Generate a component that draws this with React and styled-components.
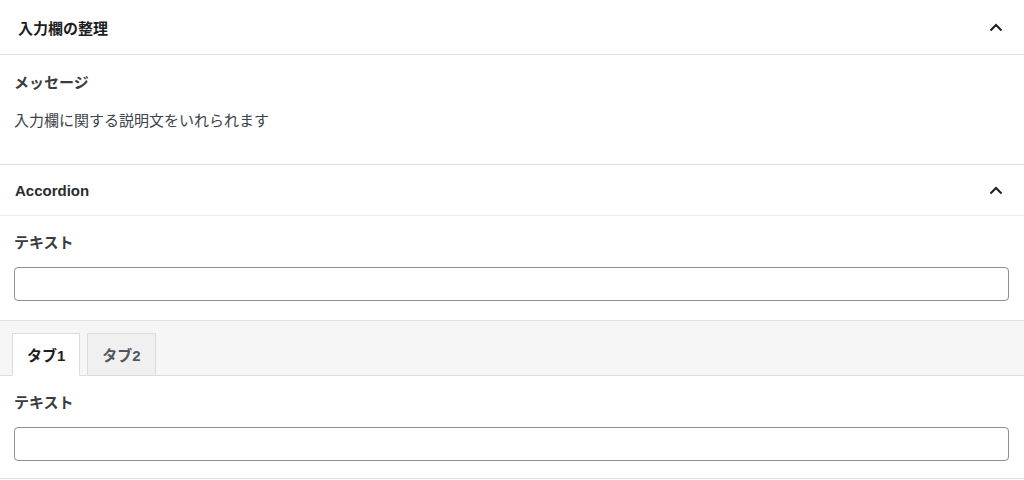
import React, { useState } from 'react';
import styled, { createGlobalStyle } from 'styled-components';

const GlobalStyle = createGlobalStyle`
    html, body {
        margin: 0;
        padding: 0;
        background: #fff;
    }
    body {
        font-family: "Liberation Sans", "Noto Sans CJK JP", sans-serif;
        color: #1e1e1e;
    }
`;

const Sidebar = styled.div`
    width: 1024px;
    height: 480px;
    overflow: hidden;
    background: #fff;
`;

const Panel = styled.section`
    border-bottom: ${(p) => (p.$open ? 'none' : '1px solid #e0e0e0')};
`;

const PanelHeader = styled.div`
    height: ${(p) => p.$height}px;
    padding: 0 16px 0 ${(p) => p.$indent}px;
    display: flex;
    align-items: center;
    justify-content: space-between;
    border-bottom: 1px solid ${(p) => p.$line};
`;

const PanelTitle = styled.h2`
    margin: 0;
    font-size: 15px;
    font-weight: 700;
    color: ${(p) => p.$color || '#1e1e1e'};
`;

const PanelBody = styled.div`
    padding: ${(p) => p.$top}px 15px ${(p) => p.$bottom}px 14px;
    display: flex;
    flex-direction: column;
`;

const Label = styled.div`
    font-size: 15px;
    line-height: 22px;
    font-weight: 700;
    color: #3c3c3c;
`;

const Help = styled.p`
    margin: 16px 0 0;
    font-size: 15px;
    line-height: 22px;
    color: #3c434a;
`;

const TextInput = styled.input`
    margin-top: 13px;
    height: 34px;
    box-sizing: border-box;
    width: 100%;
    border: 1px solid #8c8f94;
    border-radius: 4px;
    background: #fff;
    outline: none;
    font-size: 15px;
    padding: 0 8px;
`;

const TabList = styled.div`
    display: flex;
    align-items: flex-end;
    gap: 7px;
    padding: 12px 12px 0;
    height: 56px;
    box-sizing: border-box;
    background: #f6f6f6;
    border-top: 1px solid #e0e0e0;
    border-bottom: 1px solid #dcdcde;
`;

const Tab = styled.button`
    height: 43px;
    margin-bottom: -1px;
    padding: 0 14px;
    box-sizing: border-box;
    border: 1px solid #dcdcde;
    border-bottom-color: ${(p) => (p.$active ? '#fff' : '#dcdcde')};
    background: ${(p) => (p.$active ? '#fff' : '#f0f0f0')};
    font-family: inherit;
    font-size: 15px;
    font-weight: 700;
    color: ${(p) => (p.$active ? '#1e1e1e' : '#50575e')};
    cursor: pointer;
`;

const Chevron = () => (
    <svg width="24" height="24" viewBox="0 0 24 24" aria-hidden="true">
        <path d="M6.5 15.5 12 10l5.5 5.5" fill="none" stroke="#1e1e1e" strokeWidth="2" />
    </svg>
);

export default function App() {
    const [tab, setTab] = useState(0);

    return (
        <Sidebar>
            <GlobalStyle />
            <Panel>
                <PanelHeader $height={54} $indent={18} $line="#e0e0e0">
                    <PanelTitle>入力欄の整理</PanelTitle>
                    <Chevron />
                </PanelHeader>
                <PanelBody $top={17} $bottom={32}>
                    <Label>メッセージ</Label>
                    <Help>入力欄に関する説明文をいれられます</Help>
                </PanelBody>
            </Panel>
            <Panel $open>
                <PanelHeader $height={50} $indent={15} $line="#ededed">
                    <PanelTitle $color="#2c2c2c">Accordion</PanelTitle>
                    <Chevron />
                </PanelHeader>
                <PanelBody $top={16} $bottom={19}>
                    <Label>テキスト</Label>
                    <TextInput type="text" />
                </PanelBody>
            </Panel>
            <Panel>
                <TabList>
                    <Tab $active={tab === 0} onClick={() => setTab(0)}>タブ1</Tab>
                    <Tab $active={tab === 1} onClick={() => setTab(1)}>タブ2</Tab>
                </TabList>
                <PanelBody $top={16} $bottom={17}>
                    <Label>テキスト</Label>
                    <TextInput type="text" />
                </PanelBody>
            </Panel>
        </Sidebar>
    );
}
